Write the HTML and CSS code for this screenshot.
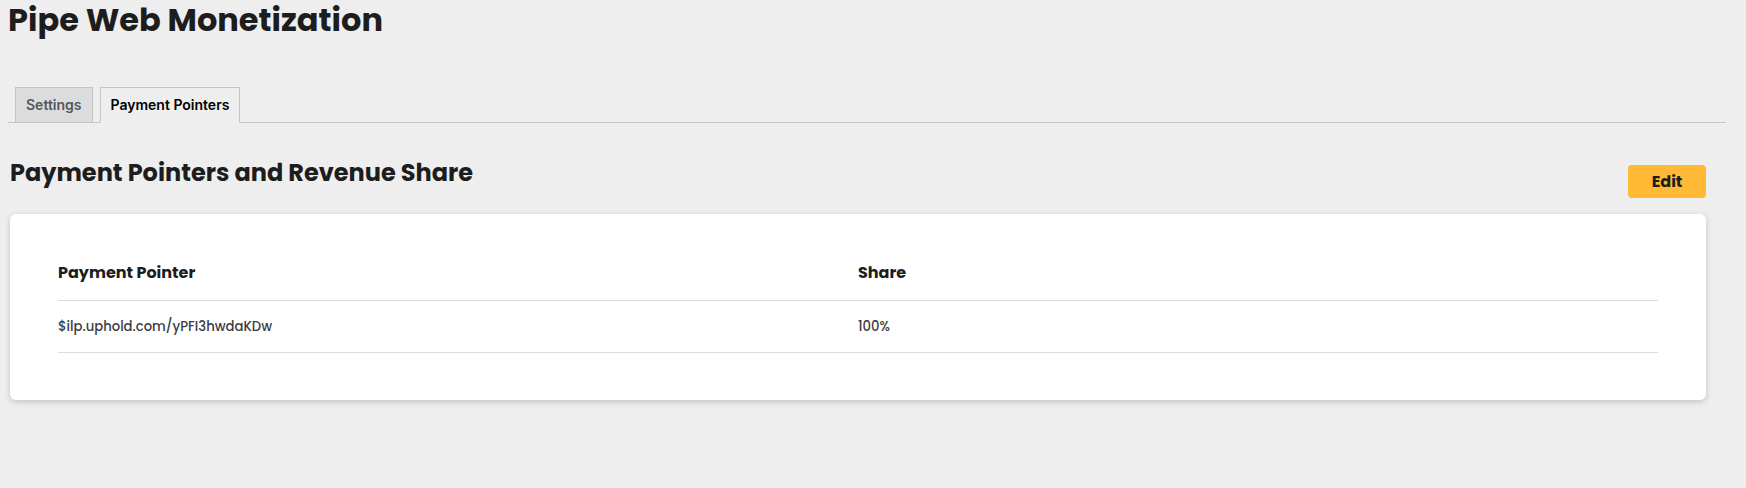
FILE: index.html
```html
<!DOCTYPE html>
<html lang="en">
<head>
<meta charset="utf-8">
<title>Pipe Web Monetization</title>
<link rel="stylesheet" href="styles.css">
</head>
<body>
<div class="wrap">
  <h1 class="page-title">Pipe Web Monetization</h1>
  <nav class="tabs">
    <a class="tab" href="#">Settings</a>
    <a class="tab tab-active" href="#">Payment Pointers</a>
  </nav>
  <section class="section">
    <div class="section-head">
      <h2 class="section-title">Payment Pointers and Revenue Share</h2>
      <button class="btn-edit" type="button">Edit</button>
    </div>
    <div class="card">
      <div class="row row-head">
        <div class="cell">Payment Pointer</div>
        <div class="cell">Share</div>
      </div>
      <div class="row row-body">
        <div class="cell">$ilp.uphold.com/yPFI3hwdaKDw</div>
        <div class="cell">100%</div>
      </div>
    </div>
  </section>
</div>
</body>
</html>
```

FILE: styles.css
```css
html, body {
  margin: 0;
  padding: 0;
}
body {
  background: #eeeeee;
  font-family: "Poppins", "Inter", "Liberation Sans", sans-serif;
  color: #1d1d1d;
  width: 1746px;
  height: 488px;
  overflow: hidden;
}
.wrap {
  padding: 0 20px 0 8px;
}
.page-title {
  margin: 0;
  padding-top: 2px;
  font-size: 32px;
  line-height: 48px;
  margin-top: -6px;
  font-weight: 700;
  color: #1d1d1d;
}
.tabs {
  display: flex;
  margin-top: 43px;
  border-bottom: 1px solid #c3c4c7;
}
.tab {
  display: block;
  margin-left: 7px;
  margin-bottom: -1px;
  padding: 5px 10px;
  border: 1px solid #c3c4c7;
  background: #dcdcde;
  color: #50575e;
  font-family: "Inter", "Liberation Sans", sans-serif;
  font-size: 14px;
  font-weight: 600;
  line-height: 24px;
  text-decoration: none;
}
.tab-active {
  background: #eeeeee;
  border-bottom-color: #eeeeee;
  color: #000;
}
.section {
  margin: 35px 20px 0 2px;
}
.section-head {
  display: flex;
  justify-content: space-between;
  align-items: flex-start;
}
.section-title {
  margin: 0;
  font-size: 24px;
  line-height: 30px;
  font-weight: 700;
  color: #1d1d1d;
}
.btn-edit {
  margin-top: 7px;
  width: 78px;
  height: 33px;
  border: none;
  border-radius: 4px;
  background: #ffb934;
  color: #1d1d1d;
  font-family: "Poppins", "Inter", sans-serif;
  font-size: 16px;
  font-weight: 700;
  padding: 0;
}
.card {
  margin-top: 16px;
  background: #ffffff;
  border-radius: 6px;
  box-shadow: 0 2px 6px rgba(0, 0, 0, 0.18);
  padding: 48px 48px 47px;
}
.row {
  display: grid;
  grid-template-columns: 1fr 1fr;
  border-bottom: 1px solid #dcdcdc;
}
.row-head {
  padding-bottom: 16px;
  font-size: 16px;
  line-height: 22px;
  font-weight: 700;
  color: #1d1d1d;
}
.row-body {
  padding: 16px 0;
  font-size: 13.2px;
  line-height: 19px;
  font-weight: 500;
  color: #3c3c44;
}
```
